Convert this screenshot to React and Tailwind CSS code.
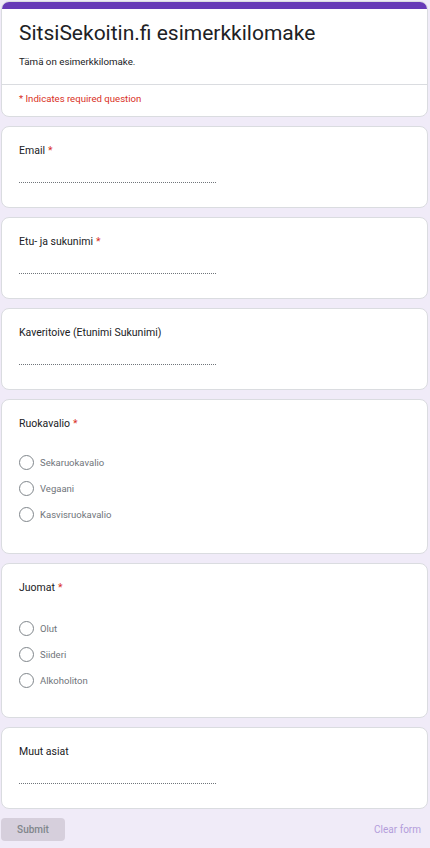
const font = { fontFamily: 'Roboto, "Liberation Sans", Arial, sans-serif' }

function Label({ text, required }) {
  return (
    <div className="text-[10.5px] leading-[20px] text-[#202124]">
      {text}
      {required && <span className="ml-[3px] text-[#d93025]">*</span>}
    </div>
  )
}

function TextQuestion({ label, required }) {
  return (
    <div className="rounded-lg border border-[#dadce0] bg-white px-[17px] pt-[14px] pb-[24px]">
      <Label text={label} required={required} />
      <div className="mt-[21px] w-[197px] border-b border-dotted border-[#70757a]" />
    </div>
  )
}

function RadioQuestion({ label, required, options, lower }) {
  return (
    <div className={`rounded-lg border border-[#dadce0] bg-white px-[17px] pt-[14px] ${lower ? 'pb-[29px]' : 'pb-[31px]'}`}>
      <Label text={label} required={required} />
      <div className={`flex flex-col gap-[11px] ${lower ? 'mt-[23px]' : 'mt-[21px]'}`}>
        {options.map((o) => (
          <label key={o} className="flex items-center gap-[6px]">
            <span className="h-[15px] w-[15px] rounded-full border-[1.5px] border-[#80868b]" />
            <span className="text-[9.5px] leading-[15px] text-[#70757a]">{o}</span>
          </label>
        ))}
      </div>
    </div>
  )
}

export default function App() {
  return (
    <div className="min-h-[848px] bg-[#f0ebf8] pt-[1px] pl-[1px] pr-[2px] pb-[6px]" style={font}>
      <div className="flex flex-col gap-[9px]">
        <div className="overflow-hidden rounded-lg border border-[#dadce0] bg-white">
          <div className="h-[7px] bg-[#673ab7]" />
          <div className="px-[17px] pt-[8px] pb-[14px]">
            <h1 className="text-[21px] leading-[32px] text-[#202124]">SitsiSekoitin.fi esimerkkilomake</h1>
            <p className="mt-[5px] text-[9.75px] leading-[16px] text-[#202124]">Tämä on esimerkkilomake.</p>
          </div>
          <div className="border-t border-[#dadce0] px-[17px] pt-[6px] pb-[9px] text-[9.6px] leading-[16px] text-[#d93025]">
            * Indicates required question
          </div>
        </div>
        <TextQuestion label="Email" required />
        <TextQuestion label="Etu- ja sukunimi" required />
        <TextQuestion label="Kaveritoive (Etunimi Sukunimi)" />
        <RadioQuestion label="Ruokavalio" required options={['Sekaruokavalio', 'Vegaani', 'Kasvisruokavalio']} />
        <RadioQuestion label="Juomat" required lower options={['Olut', 'Siideri', 'Alkoholiton']} />
        <TextQuestion label="Muut asiat" />
      </div>
      <div className="mt-[9px] flex items-center justify-between">
        <button className="h-[23px] w-[64px] rounded-[4px] bg-[#d6cfdc] text-[10px] font-medium text-[#80868b]">
          Submit
        </button>
        <span className="mr-[7px] text-[10px] text-[#b39ddb]">Clear form</span>
      </div>
    </div>
  )
}
